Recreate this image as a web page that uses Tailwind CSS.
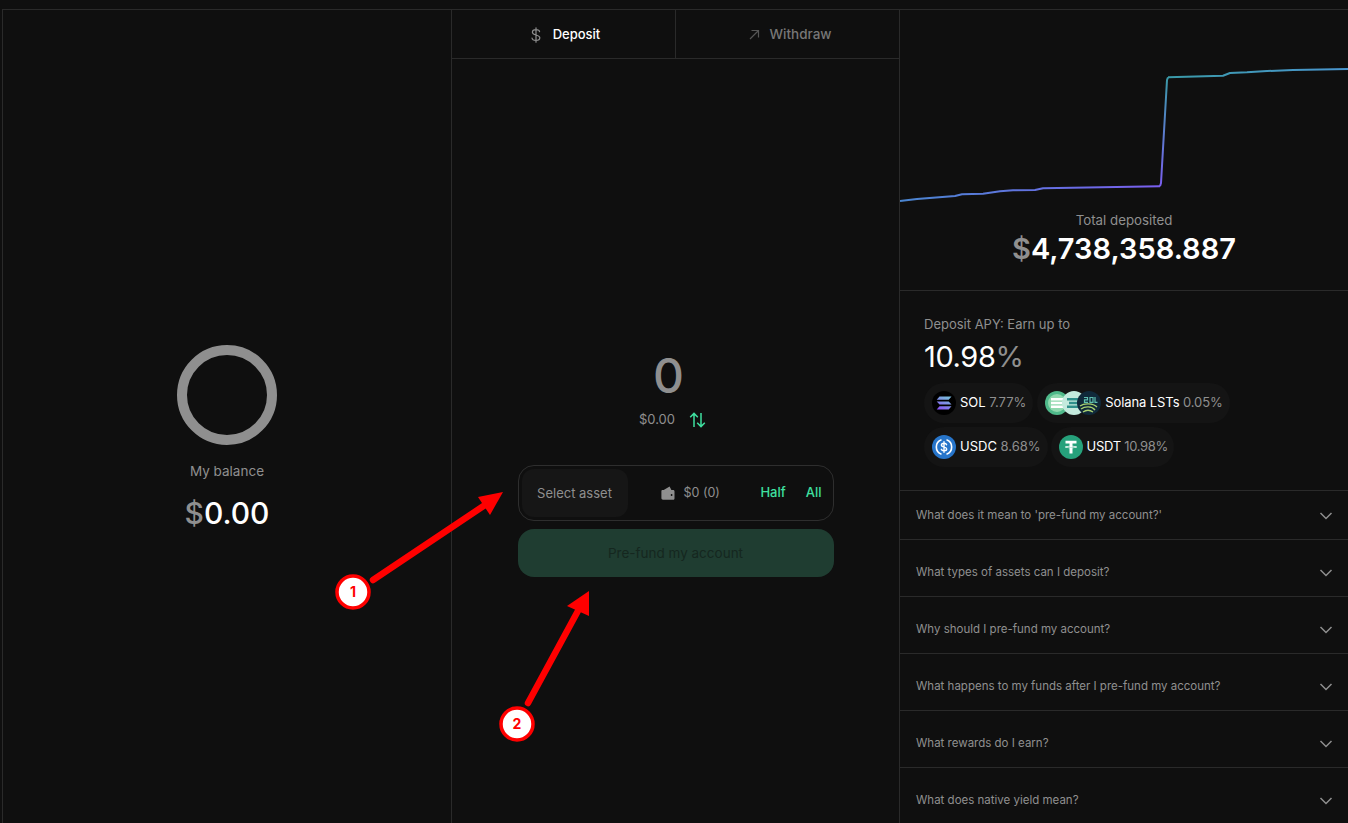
<!DOCTYPE html>
<html lang="en">
<head>
    <meta charset="UTF-8">
    <title>Pre-fund account</title>
    <script src="https://cdn.jsdelivr.net/npm/@tailwindcss/browser@4"></script>
</head>
<body class="bg-[#0f0f0f] text-white font-['Inter',sans-serif]">
    <div class="relative w-[1348px] h-[823px] overflow-hidden pt-[9px] pl-[2px]">
        <div class="flex h-[814px] border-t border-l border-[#2a2a2a]">

            <!-- Balance column -->
            <div class="w-[449px] shrink-0 border-r border-[#2a2a2a] flex flex-col items-center pt-[335px]">
                <div class="w-[100px] h-[100px] rounded-full border-[10px] border-[#8f8f8f]"></div>
                <p class="mt-[17px] text-[13.5px] leading-[18px] text-[#8f8f8f]">My balance</p>
                <p class="mt-[15px] text-[30px] leading-[36px] font-medium"><span class="text-[#8f8f8f]">$</span>0.00</p>
            </div>

            <!-- Deposit column -->
            <div class="w-[448px] shrink-0 border-r border-[#2a2a2a] flex flex-col">
                <div class="flex h-[49px] shrink-0 border-b border-[#2a2a2a]">
                    <div class="w-[224px] shrink-0 flex items-center justify-center gap-[9px] pl-[1px] pt-[1px] border-r border-[#2a2a2a] text-[13px] font-medium">
                        <svg class="w-[16px] h-[16px]" viewBox="0 0 16 16" fill="none" stroke="#8f8f8f" stroke-width="1.2" stroke-linecap="round"><path d="M8 .8v14.4M11.6 4.6C11.4 3.2 10 2.6 8 2.6c-2.2 0-3.6 1-3.6 2.6 0 3.6 7.400 2 7.400 5.600 0 1.600-1.600 2.600-3.800 2.600-2.200 0-3.800-.8-4-2.400"/></svg>
                        <span>Deposit</span>
                    </div>
                    <div class="flex-1 flex items-center justify-center gap-[9px] pl-[6px] pt-[1px] text-[13.5px] font-medium text-[#777]">
                        <svg class="w-[11px] h-[11px]" viewBox="0 0 11 11" fill="none" stroke="#555" stroke-width="1.2"><path d="M1 10 9.5 1.5M2.5 1.5h7v7"/></svg>
                        <span>Withdraw</span>
                    </div>
                </div>
                <div class="flex flex-col items-center pt-[288px]">
                    <p class="pr-[14px] text-[48px] leading-[58px] font-medium text-[#8f8f8f]">0</p>
                    <div class="mt-[3px] pr-[6px] flex items-center gap-[14px] h-[24px]">
                        <span class="text-[13px] text-[#8f8f8f]">$0.00</span>
                        <svg class="w-[17px] h-[16px]" viewBox="0 0 17 16" fill="none" stroke="#3fe0a0" stroke-width="1.5"><path d="M5 15V1.5M1.2 5.2 5 1.4l3.8 3.8M12 1v13.5M8.2 10.8l3.8 3.8 3.8-3.8"/></svg>
                    </div>
                    <div class="mt-[33px] w-[316px] h-[56px] rounded-[16px] border border-[#2e2e2e] flex items-center pl-[3px] pr-[11px]">
                        <div class="w-[106px] h-[48px] pt-[1px] rounded-[12px] bg-[#161616] flex items-center justify-center text-[13px] text-[#8f8f8f]">Select asset</div>
                        <div class="flex items-center ml-[33px] gap-[9px] text-[12.5px] text-[#8f8f8f]">
                            <svg class="w-[14px] h-[14px]" viewBox="0 0 14 14" fill="#8f8f8f"><path d="M1 5 8.6.6 10.4 4H1z"/><path d="M.4 5c0-.5.4-.9.9-.9h10.900c.7 0 1.300.6 1.300 1.300v7c0 .7-.6 1.300-1.300 1.300H2c-.9 0-1.600-.7-1.600-1.600z"/><circle cx="10.6" cy="9" r=".9" fill="#0f0f0f"/></svg>
                            <span>$0 (0)</span>
                        </div>
                        <div class="ml-auto flex items-center gap-[20px] text-[13px] font-medium text-[#3fe0a0]">
                            <span>Half</span>
                            <span>All</span>
                        </div>
                    </div>
                    <div class="mt-[8px] w-[316px] h-[48px] rounded-[16px] bg-[#1f3d31] flex items-center justify-center text-[13.5px] text-[#15271f]">Pre-fund my account</div>
                </div>
            </div>

            <!-- Stats column -->
            <div class="flex-1 flex flex-col min-w-0">
                <div class="h-[281px] shrink-0 border-b border-[#2a2a2a] relative flex flex-col items-center pt-[201px]">
                    <svg class="absolute left-0 top-0 w-[448px] h-[200px]" viewBox="900 10 448 200" fill="none" stroke-width="2" stroke-linejoin="round">
                        <defs>
                            <linearGradient id="lineLow" gradientUnits="userSpaceOnUse" x1="900" y1="0" x2="1160" y2="0"><stop offset="0" stop-color="#4a86d0"/><stop offset="1" stop-color="#7a5ff0"/></linearGradient>
                            <linearGradient id="lineJump" gradientUnits="userSpaceOnUse" x1="0" y1="186" x2="0" y2="77"><stop offset="0" stop-color="#7a5ff0"/><stop offset="1" stop-color="#3a9aa8"/></linearGradient>
                            <linearGradient id="lineHigh" gradientUnits="userSpaceOnUse" x1="1168" y1="0" x2="1348" y2="0"><stop offset="0" stop-color="#3a9aa8"/><stop offset="1" stop-color="#4a96d0"/></linearGradient>
                        </defs>
                        <path stroke="url(#lineLow)" d="M900 201 917 199 955 196 962 194.3 983 193.7 1000 191.3 1013 190.3 1035 190 1043 188.3 1160 186.3"/>
                        <path stroke="url(#lineJump)" d="M1160 186.3 1161 183 1167 80 1168 77.3"/>
                        <path stroke="url(#lineHigh)" d="M1168 77.3 1223 75.7 1230 73 1247 72.3 1267 71 1293 70 1348 69"/>
                    </svg>
                    <p class="text-[13.3px] leading-[18px] text-[#8f8f8f]">Total deposited</p>
                    <p class="mt-[1px] text-[29px] leading-[38px] font-semibold"><span class="text-[#8f8f8f]">$</span>4,738,358.887</p>
                </div>

                <div class="h-[200px] shrink-0 border-b border-[#2a2a2a] pl-[24px] pt-[24px]">
                    <p class="text-[13px] leading-[18px] text-[#8f8f8f]">Deposit APY: Earn up to</p>
                    <p class="mt-[6px] text-[29px] leading-[36px] tracking-[-0.4px]">10.98<span class="text-[#8f8f8f]">%</span></p>
                    <div class="mt-[8px] flex gap-[4px]">
                        <div class="h-[40px] pl-[8px] pr-[7px] rounded-full bg-[#141414] flex items-center gap-[4px] text-[13px]">
                            <svg class="w-[24px] h-[24px]" viewBox="0 0 24 24">
                                <defs><linearGradient id="solMark" x1="0" y1="1" x2="0.6" y2="0"><stop offset="0" stop-color="#8a4cf5"/><stop offset="1" stop-color="#79b8dc"/></linearGradient></defs>
                                <circle cx="12" cy="12" r="12" fill="#000"/>
                                <path fill="url(#solMark)" d="M7.500 5.500h12l-2.800 3.200H4.700zM4.700 10.400h12l2.800 3.200h-12zM7.500 15.300h12l-2.800 3.200H4.700z"/>
                            </svg>
                            <span>SOL <span class="text-[#8f8f8f]">7.77%</span></span>
                        </div>
                        <div class="h-[40px] pl-[8px] pr-[7px] rounded-full bg-[#141414] flex items-center gap-[4px] text-[13px]">
                            <svg class="w-[56px] h-[24px]" viewBox="0 0 56 24">
                                <circle cx="12" cy="12" r="12" fill="#4fb98a"/><circle cx="12" cy="12" r="9" fill="#8fd8ae"/>
                                <path fill="#fff" d="M6 7h13v2.400H6zM6 10.800h13v2.400H6zM6 14.600h13v2.400H6z"/>
                                <circle cx="29" cy="12" r="12" fill="#c4eadd"/>
                                <path fill="#2f8f8a" d="M22 7h13v2.400H22zM24 10.800h13v2.400H24zM22 14.600h13v2.400H22z"/>
                                <circle cx="44" cy="12" r="12" fill="#10293a"/>
                                <path fill="none" stroke="#a8d070" stroke-width="1.400" d="M35 15c4-3 13-3 17 1M36 18c4-3 11-3 14 1M38 21c3-2 7-2 10 0"/>
                                <path fill="none" stroke="#5fc0b0" stroke-width="1.200" d="M39 6.500h3.500v2.400h-3v2.400h3.500M45 6.500h3v4.800h-3zM50 6v5.400h2.500"/>
                            </svg>
                            <span class="tracking-[-0.1px]">Solana LSTs <span class="text-[#8f8f8f]">0.05%</span></span>
                        </div>
                    </div>
                    <div class="mt-[4px] flex gap-[3px]">
                        <div class="h-[40px] pl-[8px] pr-[7px] rounded-full bg-[#141414] flex items-center gap-[4px] text-[13px]">
                            <svg class="w-[24px] h-[24px]" viewBox="0 0 24 24" fill="none">
                                <circle cx="12" cy="12" r="12" fill="#2775ca"/>
                                <path stroke="#fff" stroke-width="1.600" d="M9.500 4.800a7.600 7.600 0 0 0 0 14.400M14.500 4.800a7.600 7.600 0 0 1 0 14.400"/>
                                <path stroke="#fff" stroke-width="1.400" stroke-linecap="round" d="M14.600 9.700c-.3-1-1.300-1.500-2.600-1.500-1.500 0-2.600.8-2.600 1.900 0 2.800 5.300 1.300 5.300 4 0 1.100-1.200 1.800-2.700 1.800-1.400 0-2.400-.6-2.700-1.600M12 6.700v10.600"/>
                            </svg>
                            <span>USDC <span class="text-[#8f8f8f]">8.68%</span></span>
                        </div>
                        <div class="h-[40px] pl-[8px] pr-[6px] rounded-full bg-[#141414] flex items-center gap-[4px] text-[13px]">
                            <svg class="w-[24px] h-[24px]" viewBox="0 0 24 24">
                                <circle cx="12" cy="12" r="12" fill="#26a17b"/>
                                <path fill="#fff" d="M6.500 5.800h11v2.700h-4v2.300c2.600.1 4.600.6 4.600 1.200s-2 1.100-4.600 1.200v5.300h-3v-5.300c-2.600-.1-4.600-.6-4.600-1.200s2-1.100 4.600-1.200V8.500h-4z"/>
                                <path fill="#26a17b" d="M7.400 12c.8.4 2.500.6 4.600.6s3.800-.2 4.600-.6c-.8-.3-1.900-.5-3.100-.6v.9h-3v-.9c-1.200.1-2.300.3-3.100.6z"/>
                            </svg>
                            <span class="tracking-[-0.3px]">USDT <span class="text-[#8f8f8f]">10.98%</span></span>
                        </div>
                    </div>
                </div>

                <div class="h-[49px] shrink-0 border-b border-[#2a2a2a] pl-[16px] pr-[15px] pt-[1px] flex items-center justify-between text-[11.5px] text-[#8f8f8f]">
                    <span>What does it mean to 'pre-fund my account?'</span>
                    <svg class="w-[14px] h-[8px]" viewBox="0 0 14 8" fill="none" stroke="#8f8f8f" stroke-width="1.5"><path d="m1.500 1 5.500 5.500L12.500 1"/></svg>
                </div>
                <div class="h-[57px] shrink-0 border-b border-[#2a2a2a] pl-[16px] pr-[15px] pt-[9px] flex items-center justify-between text-[11.5px] text-[#8f8f8f]">
                    <span>What types of assets can I deposit?</span>
                    <svg class="w-[14px] h-[8px]" viewBox="0 0 14 8" fill="none" stroke="#8f8f8f" stroke-width="1.5"><path d="m1.500 1 5.500 5.500L12.500 1"/></svg>
                </div>
                <div class="h-[57px] shrink-0 border-b border-[#2a2a2a] pl-[16px] pr-[15px] pt-[9px] flex items-center justify-between text-[11.5px] text-[#8f8f8f]">
                    <span>Why should I pre-fund my account?</span>
                    <svg class="w-[14px] h-[8px]" viewBox="0 0 14 8" fill="none" stroke="#8f8f8f" stroke-width="1.5"><path d="m1.500 1 5.500 5.500L12.500 1"/></svg>
                </div>
                <div class="h-[57px] shrink-0 border-b border-[#2a2a2a] pl-[16px] pr-[15px] pt-[9px] flex items-center justify-between text-[11.5px] text-[#8f8f8f]">
                    <span>What happens to my funds after I pre-fund my account?</span>
                    <svg class="w-[14px] h-[8px]" viewBox="0 0 14 8" fill="none" stroke="#8f8f8f" stroke-width="1.5"><path d="m1.500 1 5.500 5.500L12.500 1"/></svg>
                </div>
                <div class="h-[57px] shrink-0 border-b border-[#2a2a2a] pl-[16px] pr-[15px] pt-[9px] flex items-center justify-between text-[11.5px] text-[#8f8f8f]">
                    <span>What rewards do I earn?</span>
                    <svg class="w-[14px] h-[8px]" viewBox="0 0 14 8" fill="none" stroke="#8f8f8f" stroke-width="1.5"><path d="m1.500 1 5.500 5.500L12.500 1"/></svg>
                </div>
                <div class="h-[57px] shrink-0 border-b border-[#2a2a2a] pl-[16px] pr-[15px] pt-[9px] flex items-center justify-between text-[11.5px] text-[#8f8f8f]">
                    <span>What does native yield mean?</span>
                    <svg class="w-[14px] h-[8px]" viewBox="0 0 14 8" fill="none" stroke="#8f8f8f" stroke-width="1.5"><path d="m1.500 1 5.500 5.500L12.500 1"/></svg>
                </div>
            </div>
        </div>

        <!-- Annotation arrows drawn over the page -->
        <svg class="absolute left-0 top-0 w-[1348px] h-[823px] pointer-events-none" viewBox="0 0 1348 823" fill="none">
            <path stroke="#ff0000" stroke-width="6.5" stroke-linecap="round" d="M373 580 488 503"/>
            <path fill="#ff0000" d="M503 492 478 497 490 515z"/>
            <path stroke="#ff0000" stroke-width="6.5" stroke-linecap="round" d="M528 703 579 609"/>
            <path fill="#ff0000" d="M589 591 567 606 589 616z"/>
            <circle cx="353" cy="592" r="16" fill="#fff" stroke="#ff0000" stroke-width="3.5"/>
            <circle cx="517" cy="724" r="16" fill="#fff" stroke="#ff0000" stroke-width="3.5"/>
            <text x="353" y="597" text-anchor="middle" fill="#ff0000" font-size="14" font-weight="700" font-family="Inter, sans-serif">1</text>
            <text x="517" y="729" text-anchor="middle" fill="#ff0000" font-size="14" font-weight="700" font-family="Inter, sans-serif">2</text>
        </svg>
    </div>
</body>
</html>
